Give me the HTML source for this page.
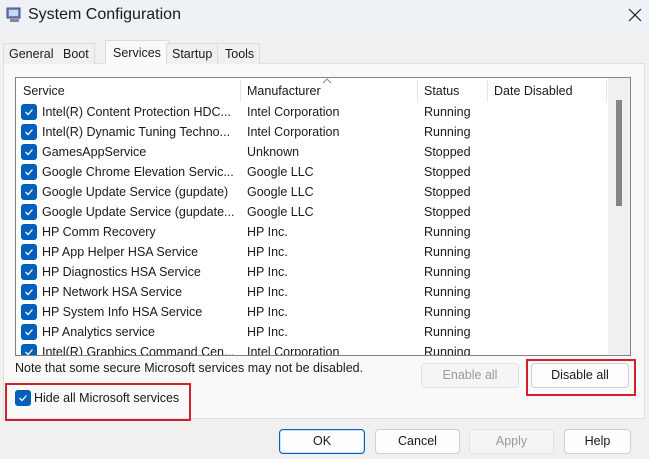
<!DOCTYPE html>
<html><head><style>
*{margin:0;padding:0;box-sizing:border-box}
body{width:649px;height:459px;background:#f0f0f0;font-family:"Liberation Sans",sans-serif;font-size:12px;color:#1a1a1a;position:relative;overflow:hidden}
.a{position:absolute;white-space:nowrap}
.title{left:0;top:0;width:649px;height:32px;background:#eef2f7}
.tab{top:43px;height:21px;line-height:21px;padding:0 5px;background:#f0f0f0;border:1px solid #dcdcdc;border-bottom:none;font-size:12.5px}
.panel{left:3px;top:63px;width:642px;height:356px;background:#f9f9f9;border:1px solid #e0e0e0}
.list{left:15px;top:77px;width:616px;height:279px;background:#fff;border:1px solid #828282;overflow:hidden}
.cb{position:absolute;width:16px;height:16px;background:#005fb8;border-radius:3px}
.cb svg{position:absolute;left:3px;top:3px}
.row{position:absolute;left:0;height:20px;line-height:20px;font-size:12.5px;width:600px}
.row span{position:absolute}
.btn{height:25px;line-height:23px;text-align:center;background:#fdfdfd;border:1px solid #d0d0d0;border-radius:4px;font-size:12.5px}
.red{border:2px solid #d1202a}
</style></head><body>
<div class="a title"></div>
<svg class="a" style="left:6px;top:7px" width="16" height="16"><rect x="1" y="1" width="13" height="10" fill="#6f86b8" stroke="#3b4f7a"/><rect x="3" y="3" width="9" height="6" fill="#c9d8f2"/><rect x="4" y="12" width="9" height="3" fill="#8a8a8a"/></svg>
<div class="a" style="left:28px;top:6px;font-size:16px">System Configuration</div>
<svg class="a" style="left:628px;top:8px" width="14" height="14"><path d="M1 1L13 13M13 1L1 13" stroke="#222" stroke-width="1.2"/></svg>
<div class="a panel"></div>
<div class="a tab" style="left:3px">General</div>
<div class="a tab" style="left:58px;border-left:none">Boot</div>
<div class="a tab" style="left:105px;top:40px;height:24px;background:#f9f9f9;padding:0 7px;line-height:24px">Services</div>
<div class="a tab" style="left:166px">Startup</div>
<div class="a tab" style="left:220px;border-left:none">Tools</div>
<div class="a list">
<div class="row" style="top:3px"><span style="left:7px">Service</span><span style="left:231px">Manufacturer</span><span style="left:408px">Status</span><span style="left:478px">Date Disabled</span></div>
<div style="position:absolute;left:224px;top:2px;width:1px;height:22px;background:#e5e5e5"></div>
<div style="position:absolute;left:401px;top:2px;width:1px;height:22px;background:#e5e5e5"></div>
<div style="position:absolute;left:471px;top:2px;width:1px;height:22px;background:#e5e5e5"></div>
<div style="position:absolute;left:590px;top:2px;width:1px;height:22px;background:#e5e5e5"></div>
<svg style="position:absolute;left:306px;top:0" width="10" height="6"><path d="M1 5L5 1L9 5" stroke="#888" fill="none"/></svg>
<div style="position:absolute;left:592px;top:0;width:22px;height:277px;background:#f0f0f0"></div>
<div style="position:absolute;left:600px;top:22px;width:6px;height:106px;background:#858585"></div>
<div id="rows"></div>
</div>
<script>
var d=[["Intel(R) Content Protection HDC...","Intel Corporation","Running"],["Intel(R) Dynamic Tuning Techno...","Intel Corporation","Running"],["GamesAppService","Unknown","Stopped"],["Google Chrome Elevation Servic...","Google LLC","Stopped"],["Google Update Service (gupdate)","Google LLC","Stopped"],["Google Update Service (gupdate...","Google LLC","Stopped"],["HP Comm Recovery","HP Inc.","Running"],["HP App Helper HSA Service","HP Inc.","Running"],["HP Diagnostics HSA Service","HP Inc.","Running"],["HP Network HSA Service","HP Inc.","Running"],["HP System Info HSA Service","HP Inc.","Running"],["HP Analytics service","HP Inc.","Running"],["Intel(R) Graphics Command Cen...","Intel Corporation","Running"]];
var h="";d.forEach(function(r,i){var t=24+i*20;h+='<div class="row" style="top:'+t+'px"><div class="cb" style="left:5px;top:2px"><svg width="10" height="10"><path d="M1.5 5L4 7.5L8.5 2.5" stroke="#fff" stroke-width="1.3" fill="none"/></svg></div><span style="left:26px">'+r[0]+'</span><span style="left:231px">'+r[1]+'</span><span style="left:408px">'+r[2]+'</span></div>'});
document.getElementById("rows").innerHTML=h;
</script>
<div class="a" style="left:15px;top:361px;font-size:12.5px">Note that some secure Microsoft services may not be disabled.</div>
<div class="a btn" style="left:421px;top:363px;width:98px;color:#9a9a9a;background:#f5f5f5;border-color:#e2e2e2">Enable all</div>
<div class="a red" style="left:526px;top:359px;width:110px;height:37px"></div>
<div class="a btn" style="left:531px;top:363px;width:98px">Disable all</div>
<div class="a red" style="left:5px;top:383px;width:186px;height:38px"></div>
<div class="cb" style="left:15px;top:390px"><svg width="10" height="10"><path d="M1.5 5L4 7.5L8.5 2.5" stroke="#fff" stroke-width="1.3" fill="none"/></svg></div>
<div class="a" style="left:34px;top:391px;font-size:12.5px">Hide all Microsoft services</div>
<div class="a btn" style="left:279px;top:429px;width:86px;border:1px solid #005fb8;box-shadow:inset 0 0 0 1px #cfe0f2">OK</div>
<div class="a btn" style="left:375px;top:429px;width:85px">Cancel</div>
<div class="a btn" style="left:469px;top:429px;width:85px;color:#9a9a9a;background:#f5f5f5;border-color:#e2e2e2">Apply</div>
<div class="a btn" style="left:564px;top:429px;width:67px">Help</div>
</body></html>
